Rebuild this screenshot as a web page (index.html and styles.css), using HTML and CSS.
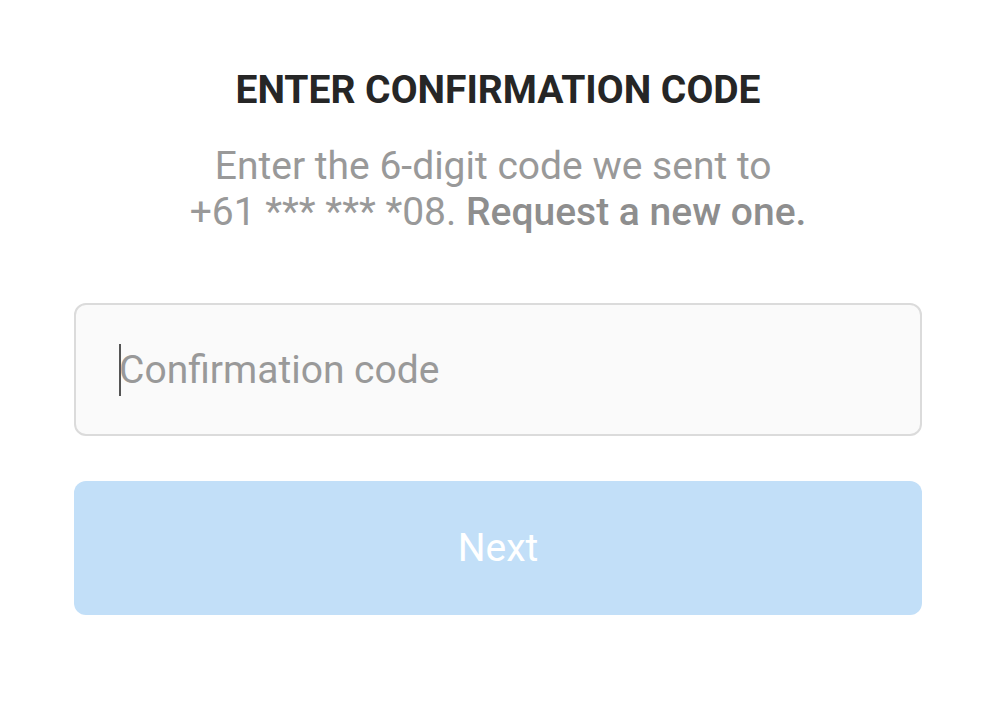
FILE: index.html
```html
<!DOCTYPE html>
<html lang="en">
<head>
<meta charset="utf-8">
<title>Enter confirmation code</title>
<link rel="stylesheet" href="styles.css">
</head>
<body>
<main class="page">
  <h1 class="title">ENTER CONFIRMATION CODE</h1>
  <p class="subtitle">Enter the 6-digit code we sent to&nbsp;<br>+61 *** *** *08. <a class="link" href="#">Request a new one.</a></p>
  <div class="field">
    <span class="caret"></span>
    <span class="placeholder">Confirmation code</span>
  </div>
  <button class="next" type="button">Next</button>
</main>
</body>
</html>
```

FILE: styles.css
```css
html, body {
  margin: 0;
  padding: 0;
  background: #ffffff;
}

body {
  font-family: Roboto, "Liberation Sans", sans-serif;
  width: 1000px;
  height: 720px;
  overflow: hidden;
}

.page {
  display: flex;
  flex-direction: column;
  align-items: center;
  padding: 65px 78px 0 74px;
}

.title {
  margin: 0;
  font-size: 39px;
  font-weight: 700;
  color: #262626;
  line-height: 50px;
}

.subtitle {
  margin: 28px 0 0;
  font-size: 39px;
  line-height: 46px;
  color: #999999;
  text-align: center;
  font-weight: 400;
}

.link {
  color: #8e8e8e;
  font-weight: 500;
  text-decoration: none;
}

.field {
  margin-top: 68px;
  align-self: stretch;
  height: 133px;
  box-sizing: border-box;
  border: 2px solid #dbdbdb;
  border-radius: 12px;
  background: #fafafa;
  display: flex;
  align-items: center;
  padding-left: 43px;
}

.caret {
  width: 2px;
  height: 52px;
  background: #555555;
  margin-right: -2px;
}

.placeholder {
  font-size: 39px;
  color: #999999;
}

.next {
  margin-top: 45px;
  align-self: stretch;
  height: 134px;
  border: none;
  border-radius: 12px;
  background: #c2dff8;
  color: #ffffff;
  font-family: Roboto, "Liberation Sans", sans-serif;
  font-size: 39px;
  font-weight: 400;
  padding: 0;
  cursor: default;
}
```
